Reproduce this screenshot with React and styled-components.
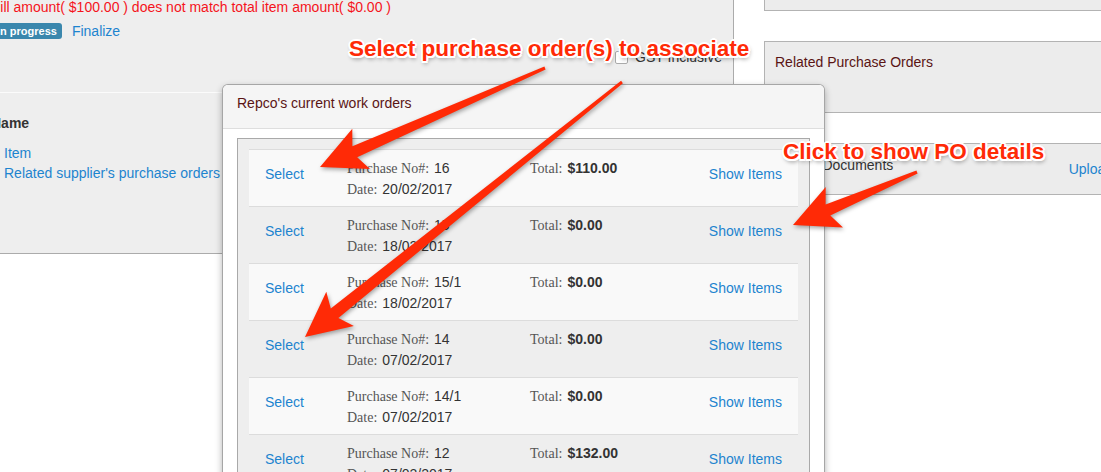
import React from 'react';
import styled, { createGlobalStyle } from 'styled-components';

const GlobalStyle = createGlobalStyle`
  html, body {
    margin: 0;
    padding: 0;
    background: #fff;
    overflow: hidden;
  }
  body {
    font-family: "Liberation Sans", Arial, Helvetica, sans-serif;
    font-size: 14px;
    line-height: 20px;
    color: #333;
  }
`;

const Viewport = styled.div`
  position: relative;
  width: 1101px;
  height: 472px;
  overflow: hidden;
`;

const Page = styled.div`
  display: flex;
  align-items: flex-start;
  margin: -20px 0 0 -20px;
`;

const LeftPanel = styled.div`
  box-sizing: border-box;
  flex: none;
  width: 754px;
  height: 274px;
  padding: 17px 11px 0 11px;
  background: #eeeeee;
  border-right: 1px solid #ababab;
  border-bottom: 1px solid #ababab;
`;

const ErrorLine = styled.div`
  color: #f5141c;
  white-space: nowrap;
`;

const StatusRow = styled.div`
  display: flex;
  align-items: center;
  gap: 10px;
  margin-top: 4px;
  height: 20px;
`;

const Badge = styled.span`
  margin-left: 2px;
  padding: 2px 5px 2px 4px;
  border-radius: 3px;
  background: #3a87ad;
  color: #fff;
  font-size: 11px;
  font-weight: bold;
  line-height: 12px;
`;

const Link = styled.a`
  color: #1d84cf;
  text-decoration: none;
  cursor: pointer;
  white-space: nowrap;
`;

const GstRow = styled.div`
  display: flex;
  justify-content: flex-end;
  align-items: center;
  gap: 7px;
  margin-top: 6px;
  height: 20px;
`;

const Checkbox = styled.span`
  width: 11px;
  height: 11px;
  border: 1px solid #aaa;
  border-radius: 2px;
  background: #fff;
`;

const Divider = styled.div`
  margin-top: 25px;
  border-top: 1px solid #fbfbfb;
`;

const FieldTitle = styled.div`
  margin-top: 20px;
  font-weight: bold;
`;

const LinkList = styled.ul`
  list-style: none;
  margin: 10px 0 0;
  padding: 0 0 0 13px;

  li {
    height: 20px;
  }
`;

const RightColumn = styled.div`
  display: flex;
  flex-direction: column;
  gap: 30px;
  padding-left: 30px;
`;

const SidePanel = styled.div`
  box-sizing: border-box;
  width: 360px;
  height: ${(p) => p.$h}px;
  display: flex;
  justify-content: space-between;
  align-items: flex-start;
  padding: ${(p) => p.$pad}px 11px 0 10px;
  background: #ececec;
  border: 1px solid #b3b3b3;
  border-right: none;
`;

const PanelTitle = styled.div`
  color: ${(p) => (p.$accent ? '#5a1414' : '#333')};
  white-space: nowrap;
`;

const UploadLink = styled(Link)`
  margin-top: 4px;
`;

const Modal = styled.div`
  position: absolute;
  left: 222px;
  top: 84px;
  width: 603px;
  height: 420px;
  box-sizing: border-box;
  background: #fff;
  border: 1px solid rgba(0, 0, 0, 0.35);
  border-radius: 6px;
  box-shadow: 0 3px 7px rgba(0, 0, 0, 0.3);
  overflow: hidden;
`;

const ModalHeader = styled.div`
  height: 44px;
  box-sizing: border-box;
  padding: 8px 14px 0;
  background: #f5f5f5;
  border-bottom: 1px solid #dedede;
  color: #5a1414;
`;

const ModalBody = styled.div`
  padding: 9px 14px 0;
`;

const OrderBox = styled.div`
  box-sizing: border-box;
  width: 573px;
  padding: 10px 11px;
  background: #eeeeee;
  border: 1px solid #a9a9a9;
`;

const OrderRow = styled.div`
  box-sizing: border-box;
  height: 57px;
  display: grid;
  grid-template-columns: 82px 183px 1fr auto;
  align-items: start;
  padding: 8px 16px 0;
  background: ${(p) => (p.$odd ? '#eeeeee' : '#f9f9f9')};
  border-top: 1px solid #dcdcdc;
`;

const RowAction = styled(Link)`
  margin-top: 6px;
`;

const Field = styled.div`
  white-space: nowrap;
`;

const Label = styled.span`
  font-family: "Liberation Serif", "Times New Roman", serif;
  color: #555;
  margin-right: 5px;
`;

const Amount = styled.b`
  color: #333;
`;

const Annotation = styled.div`
  position: absolute;
  left: ${(p) => p.$x}px;
  top: ${(p) => p.$y}px;
  font-size: 22.5px;
  font-weight: bold;
  line-height: 26px;
  color: #ff2a06;
  white-space: nowrap;
  text-shadow:
    -2px 0 #fff, 2px 0 #fff, 0 -2px #fff, 0 2px #fff,
    -1.5px -1.5px #fff, 1.5px -1.5px #fff, -1.5px 1.5px #fff, 1.5px 1.5px #fff,
    1px 3px 4px rgba(0, 0, 0, 0.45);
`;

const ArrowLayer = styled.svg`
  position: absolute;
  left: 0;
  top: 0;
  pointer-events: none;
  filter: drop-shadow(1px 2px 2px rgba(0, 0, 0, 0.35));
`;

const orders = [
  { no: '16', date: '20/02/2017', total: '$110.00' },
  { no: '15', date: '18/02/2017', total: '$0.00' },
  { no: '15/1', date: '18/02/2017', total: '$0.00' },
  { no: '14', date: '07/02/2017', total: '$0.00' },
  { no: '14/1', date: '07/02/2017', total: '$0.00' },
  { no: '12', date: '07/02/2017', total: '$132.00' },
];

const arrows = [
  { tail: [545, 68], tip: [320, 167] },
  { tail: [622, 82], tip: [305, 337] },
  { tail: [917, 172], tip: [793, 225] },
];

// tapered skitch-style arrow: thin tail, wider shaft, swept-back head
function arrowPoints([tx, ty], [px, py], head = 38, wing = 22, sweep = 7) {
  const dx = px - tx;
  const dy = py - ty;
  const len = Math.hypot(dx, dy);
  const ux = dx / len;
  const uy = dy / len;
  const nx = -uy;
  const ny = ux;
  const bx = px - ux * head;
  const by = py - uy * head;
  const wx = px - ux * (head + sweep);
  const wy = py - uy * (head + sweep);
  const pts = [
    [tx + nx * 1.5, ty + ny * 1.5],
    [bx + nx * 6, by + ny * 6],
    [wx + nx * wing, wy + ny * wing],
    [px, py],
    [wx - nx * wing, wy - ny * wing],
    [bx - nx * 6, by - ny * 6],
    [tx - nx * 1.5, ty - ny * 1.5],
  ];
  return pts.map((p) => p.map((v) => v.toFixed(1)).join(',')).join(' ');
}

export default function App() {
  return (
    <Viewport>
      <GlobalStyle />
      <Page>
        <LeftPanel>
          <ErrorLine>
            Bill amount( $100.00 ) does not match total item amount( $0.00 )
          </ErrorLine>
          <StatusRow>
            <Badge>In progress</Badge>
            <Link>Finalize</Link>
          </StatusRow>
          <GstRow>
            <Checkbox />
            <span>GST Inclusive</span>
          </GstRow>
          <Divider />
          <FieldTitle>Name</FieldTitle>
          <LinkList>
            <li>
              <Link>Item</Link>
            </li>
            <li>
              <Link>Related supplier's purchase orders</Link>
            </li>
          </LinkList>
        </LeftPanel>
        <RightColumn>
          <SidePanel $h={31} $pad={0} />
          <SidePanel $h={72} $pad={10}>
            <PanelTitle $accent>Related Purchase Orders</PanelTitle>
          </SidePanel>
          <SidePanel $h={52} $pad={11}>
            <PanelTitle>Photos/Documents</PanelTitle>
            <UploadLink>Upload</UploadLink>
          </SidePanel>
        </RightColumn>
      </Page>

      <Modal>
        <ModalHeader>Repco's current work orders</ModalHeader>
        <ModalBody>
          <OrderBox>
            {orders.map((o, i) => (
              <OrderRow key={i} $odd={i % 2 === 1}>
                <RowAction>Select</RowAction>
                <div>
                  <Field>
                    <Label>Purchase No#:</Label>
                    {o.no}
                  </Field>
                  <Field>
                    <Label>Date:</Label>
                    {o.date}
                  </Field>
                </div>
                <Field>
                  <Label>Total:</Label>
                  <Amount>{o.total}</Amount>
                </Field>
                <RowAction>Show Items</RowAction>
              </OrderRow>
            ))}
          </OrderBox>
        </ModalBody>
      </Modal>

      <Annotation $x={349} $y={36}>Select purchase order(s) to associate</Annotation>
      <Annotation $x={783} $y={139}>Click to show PO details</Annotation>

      <ArrowLayer width="1101" height="472" viewBox="0 0 1101 472">
        {arrows.map((a, i) => (
          <polygon key={i} points={arrowPoints(a.tail, a.tip)} fill="#ff2a06" />
        ))}
      </ArrowLayer>
    </Viewport>
  );
}
